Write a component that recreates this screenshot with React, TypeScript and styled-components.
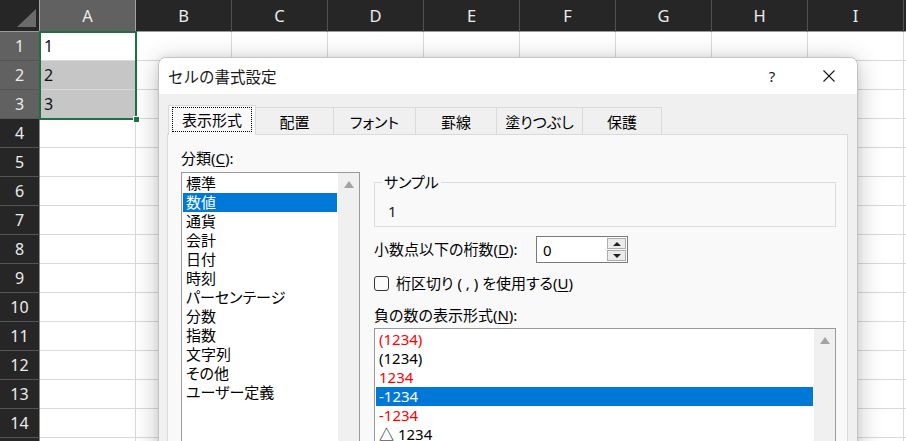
import React from 'react';
import styled, { createGlobalStyle } from 'styled-components';

const GlobalStyle = createGlobalStyle`
  html, body {
    margin: 0;
    padding: 0;
    background: #ffffff;
    overflow: hidden;
  }
  * {
    box-sizing: border-box;
  }
`;

const columns = ['A', 'B', 'C', 'D', 'E', 'F', 'G', 'H', 'I'];
const rows = Array.from({ length: 15 }, (_, i) => i + 1);

const categories = [
  '標準',
  '数値',
  '通貨',
  '会計',
  '日付',
  '時刻',
  'パーセンテージ',
  '分数',
  '指数',
  '文字列',
  'その他',
  'ユーザー定義',
];

const negatives: { label: string; red: boolean }[] = [
  { label: '(1234)', red: true },
  { label: '(1234)', red: false },
  { label: '1234', red: true },
  { label: '-1234', red: false },
  { label: '-1234', red: true },
  { label: '△ 1234', red: false },
];

const tabs = [
  { label: '表示形式', width: 88 },
  { label: '配置', width: 78 },
  { label: 'フォント', width: 82 },
  { label: '罫線', width: 81 },
  { label: '塗りつぶし', width: 86 },
  { label: '保護', width: 79 },
];

/* ---------- sheet ---------- */

const Workbook = styled.div`
  position: relative;
  width: 906px;
  height: 441px;
  overflow: hidden;
  font-family: 'Noto Sans', 'Liberation Sans', sans-serif;
`;

const Sheet = styled.div`
  display: grid;
  grid-template-columns: 40px repeat(9, 96px) 1fr;
  grid-template-rows: 32px;
  grid-auto-rows: 29px;
`;

const Corner = styled.div`
  position: relative;
  background: #262626;
  border-right: 1px solid #a3a3a3;
  border-bottom: 1px solid #9a9a9a;

  &::after {
    content: '';
    position: absolute;
    left: 17px;
    top: 9px;
    width: 19px;
    height: 18px;
    background: #6b6b6b;
    clip-path: polygon(100% 0, 100% 100%, 0 100%);
  }
`;

const ColHeader = styled.div<{ $selected?: boolean }>`
  display: flex;
  align-items: center;
  justify-content: center;
  background: ${p => (p.$selected ? '#616161' : '#262626')};
  color: #ececec;
  font-size: 16.5px;
  border-right: 1px solid ${p => (p.$selected ? '#a3a3a3' : '#505050')};
  border-bottom: 1px solid #9a9a9a;
`;

const RowHeader = styled.div<{ $selected?: boolean }>`
  display: flex;
  align-items: center;
  justify-content: center;
  background: ${p => (p.$selected ? '#616161' : '#262626')};
  color: #ececec;
  font-size: 16px;
  border-right: 1px solid #8c8c8c;
  border-bottom: 1px solid #555555;
`;

const Cell = styled.div<{ $shaded?: boolean }>`
  display: flex;
  align-items: center;
  padding-left: 4px;
  background: ${p => (p.$shaded ? '#c6c6c6' : '#ffffff')};
  color: #111111;
  font-size: 16px;
  border-right: 1px solid #d9d9d9;
  border-bottom: 1px solid #d9d9d9;
`;

const Selection = styled.div`
  position: absolute;
  left: 39px;
  top: 31px;
  width: 98px;
  height: 89px;
  border: 2px solid #1e7145;
  pointer-events: none;
`;

const FillHandle = styled.div`
  position: absolute;
  right: -5px;
  bottom: -5px;
  width: 7px;
  height: 7px;
  background: #1e7145;
  border: 1px solid #ffffff;
`;

/* ---------- dialog ---------- */

const Dialog = styled.div`
  position: absolute;
  left: 158px;
  top: 57px;
  width: 700px;
  height: 420px;
  display: flex;
  flex-direction: column;
  background: #f0f0f0;
  border: 1px solid #c4c4c4;
  border-radius: 8px 8px 0 0;
  overflow: hidden;
  box-shadow: 0 4px 26px rgba(0, 0, 0, 0.24), 0 0 6px rgba(0, 0, 0, 0.08);
  font-family: 'Noto Sans', 'Noto Sans CJK JP', sans-serif;
  font-size: 15px;
  color: #000000;
  font-feature-settings: 'palt';
`;

const TitleBar = styled.div`
  height: 36px;
  flex: none;
  display: flex;
  align-items: center;
  padding: 0 5px 0 9px;
  background: #ffffff;
`;

const Title = styled.div`
  flex: 1;
  font-size: 15.5px;
  font-feature-settings: normal;
  color: #1a1a1a;
`;

const TitleButton = styled.div`
  width: 46px;
  height: 36px;
  display: flex;
  align-items: center;
  justify-content: center;
  font-size: 15px;
  color: #1a1a1a;

  & + & {
    margin-left: 11px;
  }
`;

const Body = styled.div`
  flex: 1;
  display: flex;
  flex-direction: column;
  padding: 11px 9px 0 8px;
`;

const TabStrip = styled.div`
  height: 29px;
  display: flex;
  align-items: flex-end;
  margin-left: 1px;
`;

const Tab = styled.div<{ $width: number; $active?: boolean }>`
  position: relative;
  z-index: ${p => (p.$active ? 1 : 0)};
  width: ${p => p.$width}px;
  height: ${p => (p.$active ? 30 : 27)}px;
  margin-bottom: ${p => (p.$active ? -1 : 0)}px;
  display: flex;
  align-items: center;
  justify-content: center;
  background: ${p => (p.$active ? '#f9f9f9' : '#f0f0f0')};
  border: 1px solid #dadada;
  border-bottom: none;
  border-left-width: ${p => (p.$active ? 1 : 0)}px;
  padding-bottom: ${p => (p.$active ? 3 : 0)}px;
`;

const FocusRing = styled.span`
  display: inline-flex;
  align-items: center;
  height: 25px;
  padding: 0 9px;
  border: 1px dotted #000000;
`;

const Panel = styled.div`
  flex: 1;
  display: grid;
  grid-template-columns: 179px 462px;
  column-gap: 14px;
  align-items: start;
  padding: 14px 0 0 13px;
  background: #f9f9f9;
  border: 1px solid #dadada;
`;

const Column = styled.div`
  display: flex;
  flex-direction: column;
`;

const Label = styled.div<{ $gap?: number }>`
  line-height: 19px;
  margin-top: ${p => p.$gap ?? 0}px;
  white-space: nowrap;
`;

const Key = styled.span`
  text-decoration: underline;
  text-underline-offset: 2px;
`;

const ListBox = styled.div<{ $height: number; $gap?: number }>`
  display: flex;
  height: ${p => p.$height}px;
  margin-top: ${p => p.$gap ?? 0}px;
  background: #ffffff;
  border: 1px solid #9a9a9a;
`;

const ListItems = styled.div`
  flex: 1;
  padding: 1px;
`;

const ListItem = styled.div<{ $selected?: boolean; $red?: boolean }>`
  height: 19px;
  line-height: 19px;
  padding-left: 3px;
  white-space: nowrap;
  background: ${p => (p.$selected ? '#0078d7' : 'transparent')};
  color: ${p => (p.$selected ? '#ffffff' : p.$red ? '#ff0000' : '#000000')};
`;

const ScrollTrack = styled.div`
  width: 21px;
  flex: none;
  display: flex;
  justify-content: center;
  background: #f0f0f0;
`;

const ScrollArrow = styled.div`
  width: 0;
  height: 0;
  margin-top: 8px;
  border-left: 5px solid transparent;
  border-right: 5px solid transparent;
  border-bottom: 7px solid #a3a3a3;
`;

const SampleGroup = styled.fieldset`
  margin: 24px 0 0;
  padding: 0 7px 5px;
  border: 1px solid #dcdcdc;
  min-width: 0;
`;

const SampleLegend = styled.legend`
  padding: 0 2px;
  line-height: 19px;
`;

const SampleValue = styled.div`
  margin-top: 10px;
  padding-left: 6px;
  line-height: 19px;
  color: #1a1a1a;
`;

const FieldRow = styled.div<{ $gap: number }>`
  display: flex;
  align-items: center;
  margin-top: ${p => p.$gap}px;
`;

const FieldLabel = styled.div`
  width: 162px;
  line-height: 19px;
  white-space: nowrap;
`;

const SpinBox = styled.div`
  width: 92px;
  height: 27px;
  display: flex;
  background: #ffffff;
  border: 1px solid #7a7a7a;
`;

const SpinValue = styled.div`
  flex: 1;
  display: flex;
  align-items: center;
  padding-left: 6px;
`;

const SpinButtons = styled.div`
  width: 20px;
  display: flex;
  flex-direction: column;
  padding: 1px 1px 1px 0;
  gap: 1px;
`;

const SpinButton = styled.div<{ $down?: boolean }>`
  flex: 1;
  display: flex;
  align-items: center;
  justify-content: center;
  background: #ececec;
  border: 1px solid #adadad;

  &::after {
    content: '';
    width: 0;
    height: 0;
    border-left: 4px solid transparent;
    border-right: 4px solid transparent;
    ${p => (p.$down ? 'border-top: 4px solid #222;' : 'border-bottom: 4px solid #222;')}
  }
`;

const CheckBox = styled.span`
  width: 15px;
  height: 15px;
  flex: none;
  margin-right: 7px;
  border: 1px solid #333333;
  border-radius: 3px;
  background: #fbfbfb;
`;

const CloseIcon = () => (
  <svg width="12" height="12" viewBox="0 0 12 12">
    <path d="M0.5 0.5 L11.5 11.5 M11.5 0.5 L0.5 11.5" stroke="#1a1a1a" strokeWidth="1.1" fill="none" />
  </svg>
);

const FormatCellsDialog: React.FC = () => (
  <Dialog>
    <TitleBar>
      <Title>セルの書式設定</Title>
      <TitleButton>?</TitleButton>
      <TitleButton>
        <CloseIcon />
      </TitleButton>
    </TitleBar>
    <Body>
      <TabStrip>
        {tabs.map((tab, i) => (
          <Tab key={tab.label} $width={tab.width} $active={i === 0}>
            {i === 0 ? <FocusRing>{tab.label}</FocusRing> : tab.label}
          </Tab>
        ))}
      </TabStrip>
      <Panel>
        <Column>
          <Label>
            分類(<Key>C</Key>):
          </Label>
          <ListBox $height={280} $gap={4}>
            <ListItems>
              {categories.map(c => (
                <ListItem key={c} $selected={c === '数値'}>
                  {c}
                </ListItem>
              ))}
            </ListItems>
            <ScrollTrack>
              <ScrollArrow />
            </ScrollTrack>
          </ListBox>
        </Column>
        <Column>
          <SampleGroup>
            <SampleLegend>サンプル</SampleLegend>
            <SampleValue>1</SampleValue>
          </SampleGroup>
          <FieldRow $gap={9}>
            <FieldLabel>
              小数点以下の桁数(<Key>D</Key>):
            </FieldLabel>
            <SpinBox>
              <SpinValue>0</SpinValue>
              <SpinButtons>
                <SpinButton />
                <SpinButton $down />
              </SpinButtons>
            </SpinBox>
          </FieldRow>
          <FieldRow $gap={11}>
            <CheckBox />
            <Label>
              桁区切り ( , ) を使用する(<Key>U</Key>)
            </Label>
          </FieldRow>
          <Label $gap={13}>
            負の数の表示形式(<Key>N</Key>):
          </Label>
          <ListBox $height={140} $gap={3}>
            <ListItems>
              {negatives.map((n, i) => (
                <ListItem key={i} $red={n.red} $selected={i === 3}>
                  {n.label}
                </ListItem>
              ))}
            </ListItems>
            <ScrollTrack>
              <ScrollArrow />
            </ScrollTrack>
          </ListBox>
        </Column>
      </Panel>
    </Body>
  </Dialog>
);

const App: React.FC = () => (
  <>
    <GlobalStyle />
    <Workbook>
      <Sheet>
        <Corner />
        {columns.map(c => (
          <ColHeader key={c} $selected={c === 'A'}>
            {c}
          </ColHeader>
        ))}
        <ColHeader />
        {rows.map(r => (
          <React.Fragment key={r}>
            <RowHeader $selected={r <= 3}>{r < 15 ? r : ''}</RowHeader>
            {columns.map(c => (
              <Cell key={c} $shaded={c === 'A' && r >= 2 && r <= 3}>
                {c === 'A' && r <= 3 ? r : ''}
              </Cell>
            ))}
            <Cell />
          </React.Fragment>
        ))}
      </Sheet>
      <Selection>
        <FillHandle />
      </Selection>
      <FormatCellsDialog />
    </Workbook>
  </>
);

export default App;
